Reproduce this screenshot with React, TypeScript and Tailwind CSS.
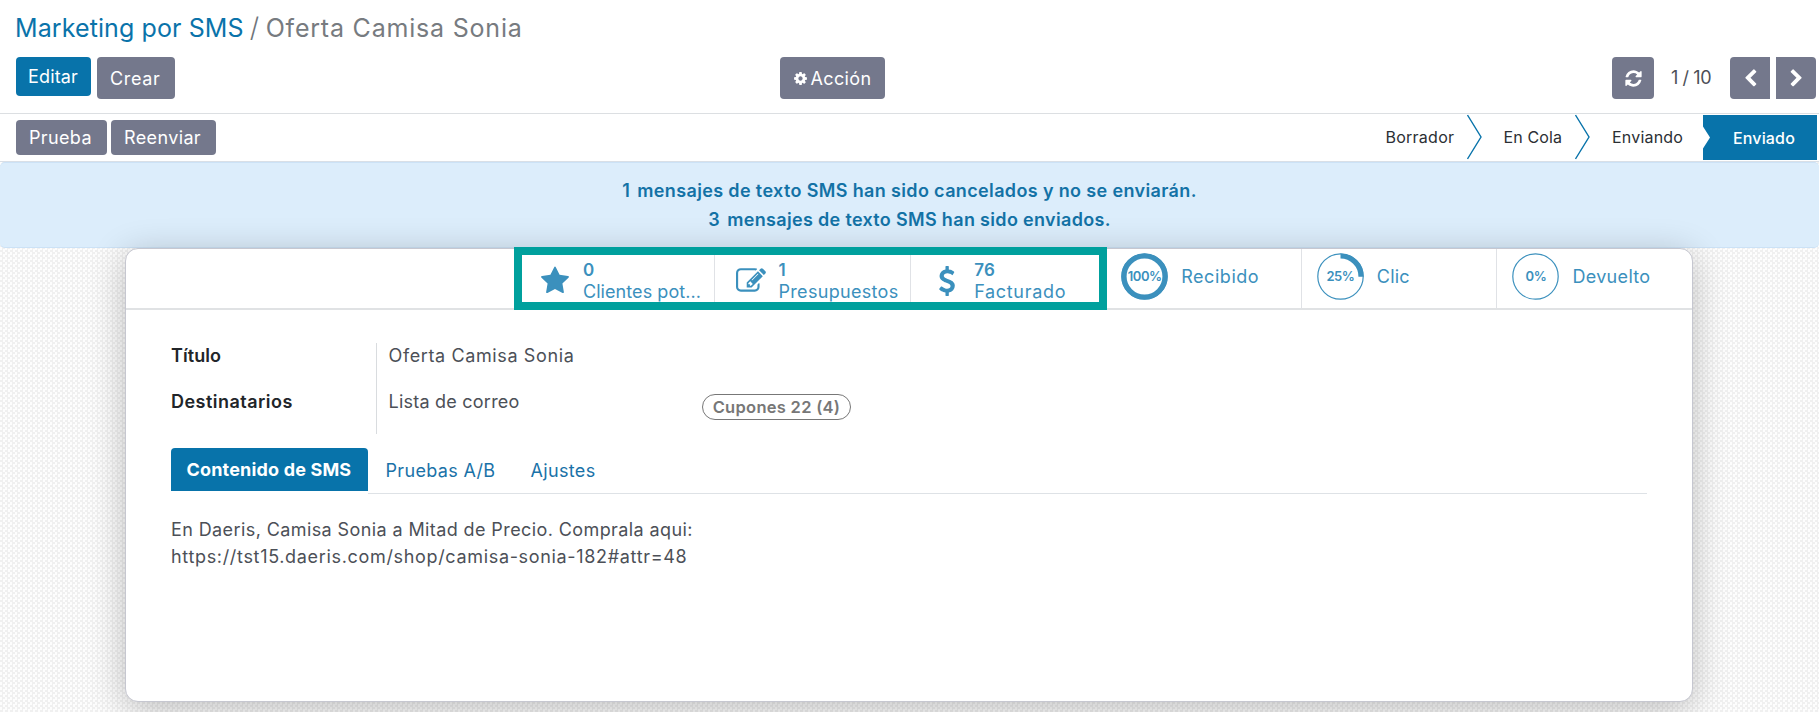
import type { ReactNode } from "react";

const REFRESH =
  "M1639 1056q0 5-1 7-64 268-268 434.5t-478 166.5q-146 0-282.5-55t-243.5-157l-129 129q-19 19-45 19t-45-19-19-45v-448q0-26 19-45t45-19h448q26 0 45 19t19 45-19 45l-137 137q71 66 161 102t187 36q134 0 250-65t186-179q11-17 53-117 8-23 30-23h192q13 0 22.5 9.5t9.5 22.5zm25-800v448q0 26-19 45t-45 19h-448q-26 0-45-19t-19-45 19-45l138-138q-148-137-349-137-134 0-250 65t-186 179q-11 17-53 117-8 23-30 23h-199q-13 0-22.5-9.5t-9.5-22.5v-7q65-268 270-434.5t480-166.5q146 0 284 55.5t245 156.5l130-129q19-19 45-19t45 19 19 45z";
const COG =
  "M1152 896q0-106-75-181t-181-75-181 75-75 181 75 181 181 75 181-75 75-181zm512-109v222q0 12-8 23t-20 13l-185 28q-19 54-39 91 35 50 107 138 10 12 10 25t-9 23q-27 37-99 108t-94 71q-12 0-26-9l-138-108q-44 23-91 38-16 136-29 186-7 28-36 28h-222q-14 0-24.5-8.5t-11.5-21.5l-28-184q-49-16-90-37l-141 107q-10 9-25 9-14 0-25-11-126-114-165-168-7-10-7-23 0-12 8-23 15-21 51-66.5t54-70.5q-27-50-41-99l-183-27q-13-2-21-12.5t-8-23.5v-222q0-12 8-23t19-13l186-28q14-46 39-92-40-57-107-138-10-12-10-24 0-10 9-23 26-36 98.5-107.5t94.5-71.5q13 0 26 10l138 107q44-23 91-38 16-136 29-186 7-28 36-28h222q14 0 24.5 8.5t11.5 21.5l28 184q49 16 90 37l142-107q9-9 24-9 13 0 25 10 129 119 165 170 7 8 7 22 0 12-8 23-15 21-51 66.5t-54 70.5q26 50 41 98l183 28q13 2 21 12.5t8 23.5z";
const CHEVRON_LEFT =
  "M1427 301l-531 531 531 531q19 19 19 45t-19 45l-166 166q-19 19-45 19t-45-19l-742-742q-19-19-19-45t19-45l742-742q19-19 45-19t45 19l166 166q19 19 19 45t-19 45z";
const CHEVRON_RIGHT =
  "M1363 877l-742 742q-19 19-45 19t-45-19l-166-166q-19-19-19-45t19-45l531-531-531-531q-19-19-19-45t19-45l166-166q19-19 45-19t45 19l742 742q19 19 19 45t-19 45z";
const STAR =
  "M1728 647q0 22-26 48l-363 354 86 500q1 7 1 20 0 21-10.5 35.5t-30.5 14.5q-19 0-40-12l-449-236-449 236q-22 12-40 12-21 0-31.5-14.5t-10.5-35.5q0-6 2-20l86-500-364-354q-25-27-25-48 0-37 56-46l502-73 225-455q19-41 49-41t49 41l225 455 502 73q56 9 56 46z";
const EDIT =
  "M888 1184l116-116-152-152-116 116v56h96v96h56zm440-720q-16-16-33 1l-350 350q-17 17-1 33t33-1l350-350q17-17 1-33zm80 594v190q0 119-84.5 203.5t-203.5 84.5h-832q-119 0-203.5-84.5t-84.5-203.5v-832q0-119 84.5-203.5t203.5-84.5h832q63 0 117 25 15 7 18 23 3 17-9 29l-49 49q-14 14-32 8-23-6-45-6h-832q-66 0-113 47t-47 113v832q0 66 47 113t113 47h832q66 0 113-47t47-113v-126q0-13 9-22l64-64q15-15 35-7t20 29zm-96-738l288 288-672 672h-288v-288zm444 132l-92 92-288-288 92-92q28-28 68-28t68 28l152 152q28 28 28 68t-28 68z";
const DOLLAR =
  "M1362 1185q0 153-99.5 263.5t-258.5 136.5v175q0 14-9 23t-23 9h-135q-13 0-22.5-9.5t-9.5-22.5v-175q-66-9-127.5-31t-101.5-44.5-74-48-46.5-37.5-17.5-18q-17-21-2-41l103-135q7-10 23-12 15-2 24 9l2 2q113 99 243 125 37 8 74 8 81 0 142.5-43t61.5-122q0-28-15-53t-33.5-42-58.5-37.5-66-32-80-32.5q-39-16-61.5-25t-61.5-26.5-62.5-31-56.5-35.5-53.5-42.5-43.5-49-35.5-58-21-66.5-8.5-78q0-138 98-242t255-134v-180q0-13 9.5-22.5t22.5-9.5h135q14 0 23 9t9 23v176q57 6 110.5 23t87 33.5 63.5 37.5 39 29 15 14q17 18 5 38l-81 146q-8 15-23 16-14 3-27-7-3-3-14.5-12t-39-26.5-58.5-32-74.5-26-85.5-11.5q-95 0-155 43t-60 111q0 26 8.5 48t29.5 41.5 39.5 33 56 31 60.5 27 70 27.5q53 20 81 31.5t76 35 75.5 42.5 62 50 53 63.5 31.5 76.5 13 94z";

function Icon({ d, className }: { d: string; className: string }) {
  return (
    <svg viewBox="0 0 1792 1792" fill="currentColor" className={`shrink-0 ${className}`}>
      <path d={d} />
    </svg>
  );
}

function Button({ className, children }: { className: string; children: ReactNode }) {
  return (
    <button className={`flex items-center rounded-[4px] text-white ${className}`}>{children}</button>
  );
}

function StatusArrow() {
  return (
    <svg width="16" height="46" viewBox="0 0 16 46" className="shrink-0" fill="none">
      <path d="M0.5 1 L14 23 L0.5 45" stroke="#0873aa" strokeWidth="1.4" />
    </svg>
  );
}

function CountStat({
  icon,
  value,
  label,
  tracking,
  divider = true,
}: {
  icon: string;
  value: string;
  label: string;
  tracking: string;
  divider?: boolean;
}) {
  return (
    <div
      className={`flex w-[195.6px] items-center border-l pt-[5px] pl-[21px] ${divider ? "border-[#e0e2e6]" : "border-transparent"}`}
    >
      <Icon d={icon} className="size-[30px]" />
      <div className="ml-[12.5px] leading-[22px]">
        <div className="text-[17px] font-semibold tracking-[0.3px]">{value}</div>
        <div className={`whitespace-nowrap ${tracking}`}>{label}</div>
      </div>
    </div>
  );
}

function RingStat({
  percent,
  label,
  tracking,
  divider = true,
}: {
  percent: number;
  label: string;
  tracking: string;
  divider?: boolean;
}) {
  const length = 2 * Math.PI * 20.5;
  return (
    <div
      className={`flex w-[195.6px] items-center border-l pb-[5px] pl-[15px] ${divider ? "border-[#e0e2e6]" : "border-transparent"}`}
    >
      <div className="grid size-[47px] shrink-0 place-items-center">
        <svg viewBox="0 0 47 47" fill="none" stroke="#3b90bd" className="col-start-1 row-start-1 size-full">
          <circle cx="23.5" cy="23.5" r="22.7" strokeWidth="1.2" />
          {percent > 0 && (
            <circle
              cx="23.5"
              cy="23.5"
              r="20.5"
              strokeWidth="5.2"
              strokeDasharray={`${(length * percent) / 100} ${length}`}
              transform="rotate(-90 23.5 23.5)"
            />
          )}
        </svg>
        <span className="col-start-1 row-start-1 text-[13px] leading-none font-semibold tracking-[-0.5px]">
          {percent}%
        </span>
      </div>
      <span className={`mt-px ml-[13px] ${tracking}`}>{label}</span>
    </div>
  );
}

export default function App() {
  return (
    <div className="flex h-[712px] w-full flex-col overflow-hidden bg-white font-['Inter',sans-serif] text-[18px] text-[#4c5057]">
      <header className="h-[114px] shrink-0 border-b border-[#dcdfe2]">
        <h1 className="flex h-[57px] items-center pb-[2px] pl-[15px] text-[25px] leading-[30px] whitespace-pre">
          <span className="tracking-[0.1px] text-[#0a73aa]">Marketing por SMS</span>
          <span className="ml-[6px] w-[16px] text-[27px] font-light text-[#6f757b]">/</span>
          <span className="tracking-[0.8px] text-[#777b80]">Oferta Camisa Sonia</span>
        </h1>
        <div className="flex items-start">
          <div className="flex w-[780px] items-start gap-[6px] pl-4">
            <Button className="h-[39px] w-[75px] bg-[#0873aa] pb-px pl-3 tracking-[0.15px]">Editar</Button>
            <Button className="h-[42px] w-[78px] bg-[#74788c] pl-[13px] tracking-[0.63px]">Crear</Button>
          </div>
          <Button className="h-[42px] w-[105px] bg-[#74788c] pl-[12.5px] tracking-[0.36px]">
            <Icon d={COG} className="mr-[3px] size-[15px]" />
            Acción
          </Button>
          <div className="ml-auto flex items-center pr-[3px]">
            <Button className="h-[42px] w-[42px] justify-center bg-[#74788c]">
              <Icon d={REFRESH} className="size-[19px]" />
            </Button>
            <span className="w-[76px] pb-px pl-[17px] tracking-[-0.4px] whitespace-nowrap">1 / 10</span>
            <Button className="h-[42px] w-10 justify-center rounded-r-none bg-[#74788c]">
              <Icon d={CHEVRON_LEFT} className="size-[19px]" />
            </Button>
            <Button className="ml-[6px] h-[42px] w-10 justify-center rounded-l-none bg-[#74788c]">
              <Icon d={CHEVRON_RIGHT} className="size-[19px]" />
            </Button>
          </div>
        </div>
      </header>

      <div className="flex h-12 shrink-0 items-start border-b border-[#d9dfe6] pl-4">
        <Button className="mt-[6px] h-[35px] w-[91px] bg-[#74788c] pl-[13px] tracking-[0.36px]">Prueba</Button>
        <Button className="mt-[6px] ml-1 h-[35px] w-[105px] bg-[#74788c] pl-[13px] tracking-[0.37px]">
          Reenviar
        </Button>
        <div className="ml-auto flex h-[46px] items-center pr-[2px] text-[16px] text-[#2b2f34]">
          <span className="w-[81.5px] tracking-[0.25px]">Borrador</span>
          <StatusArrow />
          <span className="w-[92px] pl-[20.5px] tracking-[0.13px]">En Cola</span>
          <StatusArrow />
          <span className="w-[112px] pl-[21px] tracking-[0.2px]">Enviando</span>
          <div className="flex h-[46px] pt-px">
            <svg width="8" height="45" viewBox="0 0 8 45">
              <path d="M0 0H8V45H0V33.5L7 22.5L0 11.5Z" fill="#0873aa" />
            </svg>
            <span className="flex w-[106px] items-center bg-[#0873aa] pl-[22px] font-medium tracking-[0.15px] text-white">
              Enviado
            </span>
          </div>
        </div>
      </div>

      <main className="flex flex-1 flex-col bg-[repeating-conic-gradient(#f0f0f0_0_25%,#fdfdfd_0_50%)] bg-[size:5px_5px]">
        <div className="flex h-[86px] shrink-0 flex-col items-center rounded-[5px] border-y border-[#cce2f6] bg-[#dcedfb] pt-[13px] leading-[29px] font-semibold whitespace-pre text-[#1372a6]">
          <div className="flex">
            <span className="w-[15px]">1</span>
            <span className="tracking-[0.36px]">mensajes de texto SMS han sido cancelados y no se enviarán.</span>
          </div>
          <div className="flex">
            <span className="w-[19px]">3</span>
            <span className="tracking-[0.33px]">mensajes de texto SMS han sido enviados.</span>
          </div>
        </div>

        <section className="relative ml-[125px] h-[454px] w-[1568px] shrink-0 rounded-[13px] border border-[#c6c7d0] bg-white shadow-[0_7px_36px_rgba(0,0,0,0.24)]">
          <div className="flex h-[61px] justify-end border-b-2 border-[#e0e2e4] text-[#3b90bd]">
            <CountStat icon={STAR} value="0" label="Clientes pot..." tracking="tracking-[0.07px]" divider={false} />
            <CountStat icon={EDIT} value="1" label="Presupuestos" tracking="tracking-[0.31px]" />
            <CountStat icon={DOLLAR} value="76" label="Facturado" tracking="tracking-[0.69px]" />
            <RingStat percent={100} label="Recibido" tracking="tracking-[0.54px]" divider={false} />
            <RingStat percent={25} label="Clic" tracking="tracking-[0.21px]" />
            <RingStat percent={0} label="Devuelto" tracking="tracking-[0.32px]" />
          </div>
          <div className="absolute top-[-2px] left-[388px] h-[63px] w-[593px] border-8 border-[#00a09d]" />

          <div className="px-[45px] pt-[33px]">
            <div className="flex h-[91px]">
              <div className="flex w-[205px] flex-col gap-5 leading-[26px] font-semibold text-[#212529]">
                <span className="tracking-[0.06px]">Título</span>
                <span className="tracking-[0.48px]">Destinatarios</span>
              </div>
              <div className="flex flex-col gap-5 border-l border-[#d9dcdf] pl-[11.5px] leading-[26px]">
                <span className="tracking-[0.62px]">Oferta Camisa Sonia</span>
                <div className="flex">
                  <span className="w-[313.5px] tracking-[0.23px]">Lista de correo</span>
                  <span className="mt-[5px] flex h-[26px] w-[149px] items-center justify-center rounded-full border-[1.5px] border-[#777] text-[16.5px] font-semibold tracking-[0.28px] whitespace-nowrap text-[#777]">
                    Cupones 22 (4)
                  </span>
                </div>
              </div>
            </div>

            <nav className="mt-[14px] flex items-start text-[#1a72a8]">
              <span className="flex h-[43px] w-[197px] items-center rounded-t-[4px] bg-[#0873aa] pl-[15.5px] font-bold tracking-[0.17px] whitespace-nowrap text-white">
                Contenido de SMS
              </span>
              <div className="flex h-[46px] flex-1 items-center border-b border-[#dee2e6] pl-[17.5px]">
                <span className="w-[145px] tracking-[0.33px]">Pruebas A/B</span>
                <span className="tracking-[0.34px]">Ajustes</span>
              </div>
            </nav>

            <div className="mt-[21.5px] leading-[27px] whitespace-nowrap">
              <p className="tracking-[0.4px]">En Daeris, Camisa Sonia a Mitad de Precio. Comprala aqui:</p>
              <p className="tracking-[0.67px]">https://tst15.daeris.com/shop/camisa-sonia-182#attr=48</p>
            </div>
          </div>
        </section>
      </main>
    </div>
  );
}
